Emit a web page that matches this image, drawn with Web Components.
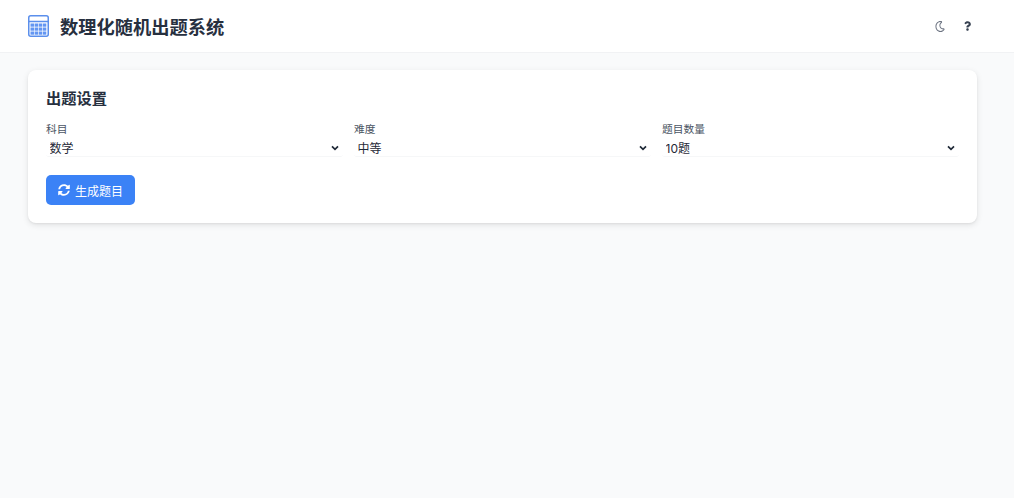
<!DOCTYPE html>
<html lang="zh-CN">
<head>
<meta charset="utf-8">
<title>数理化随机出题系统</title>
<style>
  html, body { margin: 0; height: 100%; background: #fff; }
  body { font-family: Inter, "Noto Sans CJK SC", sans-serif; overflow: hidden; }
</style>
</head>
<body>
<quiz-app>
  <quiz-header title-text="数理化随机出题系统"></quiz-header>
  <quiz-settings heading="出题设置">
    <quiz-select label="科目" options="数学,物理,化学"></quiz-select>
    <quiz-select label="难度" options="中等,简单,困难"></quiz-select>
    <quiz-select label="题目数量" options="10题,5题,20题"></quiz-select>
    <quiz-button slot="actions">生成题目</quiz-button>
  </quiz-settings>
</quiz-app>

<script>
const FONT = 'Inter, "Noto Sans CJK SC", sans-serif';

class QuizApp extends HTMLElement {
  constructor() {
    super();
    this.attachShadow({ mode: "open" });
    this.shadowRoot.innerHTML = `
      <style>
        :host {
          display: flex;
          flex-direction: column;
          width: 1014px;
          height: 498px;
          background: #f9fafb;
          font-family: ${FONT};
        }
      </style>
      <slot name="header"></slot>
      <slot></slot>
    `;
  }
}

// keypad squares for the calculator icon
function keypad() {
  let out = "";
  for (let row = 0; row < 3; row++) {
    for (let col = 0; col < 4; col++) {
      out += `<rect x="${2.5 + col * 4.1}" y="${8.5 + row * 4}" width="3.5" height="3.2"/>`;
    }
  }
  return out;
}

class QuizHeader extends HTMLElement {
  constructor() {
    super();
    this.attachShadow({ mode: "open" });
    this.shadowRoot.innerHTML = `
      <style>
        :host {
          display: flex;
          align-items: center;
          justify-content: space-between;
          box-sizing: border-box;
          height: 53px;
          padding: 0 43px 0 28px;
          background: #fff;
          border-bottom: 1px solid #f1f2f4;
        }
        .brand { display: flex; align-items: center; gap: 11px; }
        h1 { margin: 2px 0 0; font-size: 18.25px; line-height: 24px; font-weight: 700; color: #27303f; }
        .tools { display: flex; align-items: center; gap: 19px; }
        svg { display: block; }
      </style>
      <div class="brand">
        <svg width="21" height="22" viewBox="0 0 21 22">
          <rect x="0.75" y="0.75" width="19.5" height="20.5" rx="2" fill="none" stroke="#5b8fec" stroke-width="1.5"/>
          <path d="M1 6.5h19" stroke="#5b8fec" stroke-width="1.5"/>
          <g fill="#6396f2">${keypad()}</g>
        </svg>
        <h1></h1>
      </div>
      <div class="tools">
        <svg width="10" height="11" viewBox="0 0 512 512" preserveAspectRatio="none"><path fill="#6b7280" d="M279.135 512c78.756 0 150.982-35.804 198.844-94.775 28.27-34.831-2.558-85.722-46.249-77.401-82.348 15.683-158.272-47.268-158.272-130.792 0-48.424 26.06-92.292 67.434-115.836 38.745-22.05 28.999-80.788-15.022-88.919A257.936 257.936 0 0 0 279.135 0c-141.36 0-256 114.575-256 256 0 141.36 114.576 256 256 256zm0-464c12.985 0 25.689 1.201 38.016 3.478-54.76 31.163-91.693 90.042-91.693 157.554 0 113.848 103.641 199.2 215.252 177.944C402.574 433.964 344.366 464 279.135 464c-114.875 0-208-93.125-208-208s93.125-208 208-208z"/></svg>
        <svg width="7" height="10" viewBox="0 0 384 512"><path fill="#374151" d="M202.021 0C122.202 0 70.503 32.703 29.914 91.026c-7.363 10.58-5.093 25.086 5.178 32.874l43.138 32.709c10.373 7.865 25.132 6.026 33.253-4.148 25.049-31.381 43.63-49.449 82.757-49.449 30.764 0 68.816 19.799 68.816 49.631 0 22.552-18.617 34.134-48.993 51.164-35.423 19.86-82.299 44.576-82.299 106.405V320c0 13.255 10.745 24 24 24h72.471c13.255 0 24-10.745 24-24v-5.773c0-42.86 125.268-44.645 125.268-160.627C377.504 66.256 286.902 0 202.021 0zM192 373.459c-38.196 0-69.271 31.075-69.271 69.271 0 38.195 31.075 69.27 69.271 69.27s69.271-31.075 69.271-69.271-31.075-69.27-69.271-69.27z"/></svg>
      </div>
    `;
    this.shadowRoot.querySelector("h1").textContent = this.getAttribute("title-text");
  }
  connectedCallback() {
    this.setAttribute("slot", "header");
  }
}

class QuizSettings extends HTMLElement {
  constructor() {
    super();
    this.attachShadow({ mode: "open" });
    this.shadowRoot.innerHTML = `
      <style>
        :host {
          display: block;
          box-sizing: border-box;
          width: 949px;
          height: 153px;
          margin: 17px 0 0 28px;
          padding: 18px 18px 0;
          background: #fff;
          border-radius: 8px;
          box-shadow: 0 2px 6px rgba(0,0,0,0.1), 0 1px 2px rgba(0,0,0,0.05);
        }
        h2 { margin: 0 0 13px; font-size: 15.25px; line-height: 22px; font-weight: 700; color: #27303f; }
        .grid { display: grid; grid-template-columns: repeat(3, 297px); column-gap: 11px; }
        .actions { margin-top: 18px; }
      </style>
      <h2></h2>
      <div class="grid"><slot></slot></div>
      <div class="actions"><slot name="actions"></slot></div>
    `;
    this.shadowRoot.querySelector("h2").textContent = this.getAttribute("heading");
  }
}

class QuizSelect extends HTMLElement {
  constructor() {
    super();
    this.attachShadow({ mode: "open" });
    this.shadowRoot.innerHTML = `
      <style>
        :host { display: block; }
        label { display: block; font-size: 10.75px; line-height: 14px; color: #4b5563; margin-bottom: 3px; }
        .wrap { position: relative; }
        select {
          display: block;
          box-sizing: border-box;
          width: 100%;
          height: 17px;
          padding: 0 0 0 3.5px;
          font: 12px ${FONT};
          color: #1f2937;
          background: #fff;
          border: none;
          border-bottom: 1px solid #f6f7f8;
          border-radius: 3px;
          outline: none;
          appearance: none;
        }
        svg { position: absolute; right: 4px; top: 5px; pointer-events: none; }
      </style>
      <label for="s"></label>
      <div class="wrap">
        <select id="s"></select>
        <svg width="8" height="6" viewBox="0 0 8 6"><path d="M1 1.3 4 4.3 7 1.3" fill="none" stroke="#1f2937" stroke-width="1.7"/></svg>
      </div>
    `;
    this.shadowRoot.querySelector("label").textContent = this.getAttribute("label");
    const select = this.shadowRoot.querySelector("select");
    (this.getAttribute("options") || "").split(",").forEach((text) => {
      const option = document.createElement("option");
      option.textContent = text;
      select.appendChild(option);
    });
  }
}

class QuizButton extends HTMLElement {
  constructor() {
    super();
    this.attachShadow({ mode: "open" });
    this.shadowRoot.innerHTML = `
      <style>
        :host { display: inline-block; }
        button {
          display: flex;
          align-items: center;
          gap: 5px;
          box-sizing: border-box;
          width: 89px;
          height: 30px;
          padding: 0 0 0 12px;
          font: 12px ${FONT};
          color: #fff;
          background: #3b82f6;
          border: none;
          border-radius: 5px;
        }
        svg { display: block; }
      </style>
      <button type="button">
        <svg width="12" height="12" viewBox="0 0 512 512"><path fill="#fff" d="M370.72 133.28C339.458 104.008 298.888 87.962 255.848 88c-77.458.068-144.328 53.178-162.791 126.85-1.344 5.363-6.122 9.15-11.651 9.15H24.103c-7.498 0-13.194-6.807-11.807-14.176C33.933 94.924 134.813 8 256 8c66.448 0 126.791 26.136 171.315 68.685L463.03 40.97C478.149 25.851 504 36.559 504 57.941V192c0 13.255-10.745 24-24 24H345.941c-21.382 0-32.09-25.851-16.971-40.971l41.75-41.749zM32 296h134.059c21.382 0 32.09 25.851 16.971 40.971l-41.75 41.75c31.262 29.273 71.835 45.319 114.876 45.28 77.418-.07 144.315-53.144 162.787-126.849 1.344-5.363 6.122-9.15 11.651-9.15h57.304c7.498 0 13.194 6.807 11.807 14.176C478.067 417.076 377.187 504 256 504c-66.448 0-126.791-26.136-171.315-68.685L48.97 471.03C33.851 486.149 8 475.441 8 454.059V320c0-13.255 10.745-24 24-24z"/></svg>
        <slot></slot>
      </button>
    `;
  }
}

customElements.define("quiz-app", QuizApp);
customElements.define("quiz-header", QuizHeader);
customElements.define("quiz-settings", QuizSettings);
customElements.define("quiz-select", QuizSelect);
customElements.define("quiz-button", QuizButton);
</script>
</body>
</html>
